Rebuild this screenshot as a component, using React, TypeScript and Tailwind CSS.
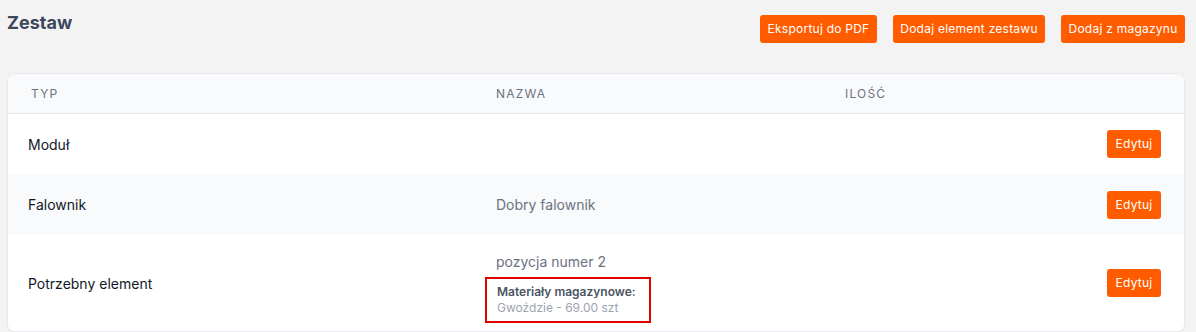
const rows = [
  { typ: "Moduł", nazwa: "", h: "h-[60px]", bg: "bg-white" },
  { typ: "Falownik", nazwa: "Dobry falownik", h: "h-[61px]", bg: "bg-[#f9fafb]" },
];

const OrangeButton = ({ label, className = "" }: { label: string; className?: string }) => (
  <button
    className={
      "h-7 rounded-[3px] bg-[#ff5c00] text-[12px] text-white tracking-[0.02em] " + className
    }
  >
    {label}
  </button>
);

export default function App() {
  return (
    <div
      className="min-h-[332px] w-full bg-[#f3f3f3] pl-[7px] pr-[11px] text-[14px]"
      style={{ fontFamily: "Inter, 'Noto Sans', sans-serif" }}
    >
      <div className="flex items-start justify-between pt-[15px]">
        <h1 className="-mt-[6px] text-[18px] font-bold leading-7 text-[#3b475b]">Zestaw</h1>
        <div className="flex gap-4">
          <OrangeButton label="Eksportuj do PDF" className="w-[117px]" />
          <OrangeButton label="Dodaj element zestawu" className="w-[152px]" />
          <OrangeButton label="Dodaj z magazynu" className="w-[124px]" />
        </div>
      </div>

      <div className="mt-[30px] overflow-hidden rounded-lg border border-[#e8e9ec] bg-white shadow-[0_1px_2px_rgba(0,0,0,0.04)]">
        <div className="grid h-[40px] grid-cols-[465px_349px_1fr_auto] items-center border-b border-[#e5e7eb] bg-[#f9fafb] text-[12px] font-normal uppercase tracking-[0.1em] text-[#6b7280]">
          <div className="pl-[23px]">Typ</div>
          <div className="pl-[23px]">Nazwa</div>
          <div className="pl-[23px]">Ilość</div>
          <div />
        </div>

        {rows.map((r) => (
          <div
            key={r.typ}
            className={"grid grid-cols-[465px_349px_1fr_auto] items-center " + r.h + " " + r.bg}
          >
            <div className="pl-[20px] text-[#111827]">{r.typ}</div>
            <div className="pl-[23px] text-[#6b7280]">{r.nazwa}</div>
            <div />
            <div className="pr-[23px]">
              <OrangeButton label="Edytuj" className="w-[54px]" />
            </div>
          </div>
        ))}

        <div className="grid h-[96px] grid-cols-[465px_349px_1fr_auto] items-center bg-white">
          <div className="pl-[20px] text-[#111827]">Potrzebny element</div>
          <div className="pl-[12px] pt-[8px]">
            <div className="pl-[11px] leading-5 text-[#6b7280]">pozycja numer 2</div>
            <div className="mt-[5px] w-[166px] border-2 border-[#e00000] px-[10px] py-[5px] text-[12px] leading-4">
              <div className="font-semibold text-[#4b5563]">Materiały magazynowe:</div>
              <div className="text-[#9ca3af]">Gwoździe - 69.00 szt</div>
            </div>
          </div>
          <div />
          <div className="pr-[23px]">
            <OrangeButton label="Edytuj" className="w-[54px]" />
          </div>
        </div>
      </div>
    </div>
  );
}
